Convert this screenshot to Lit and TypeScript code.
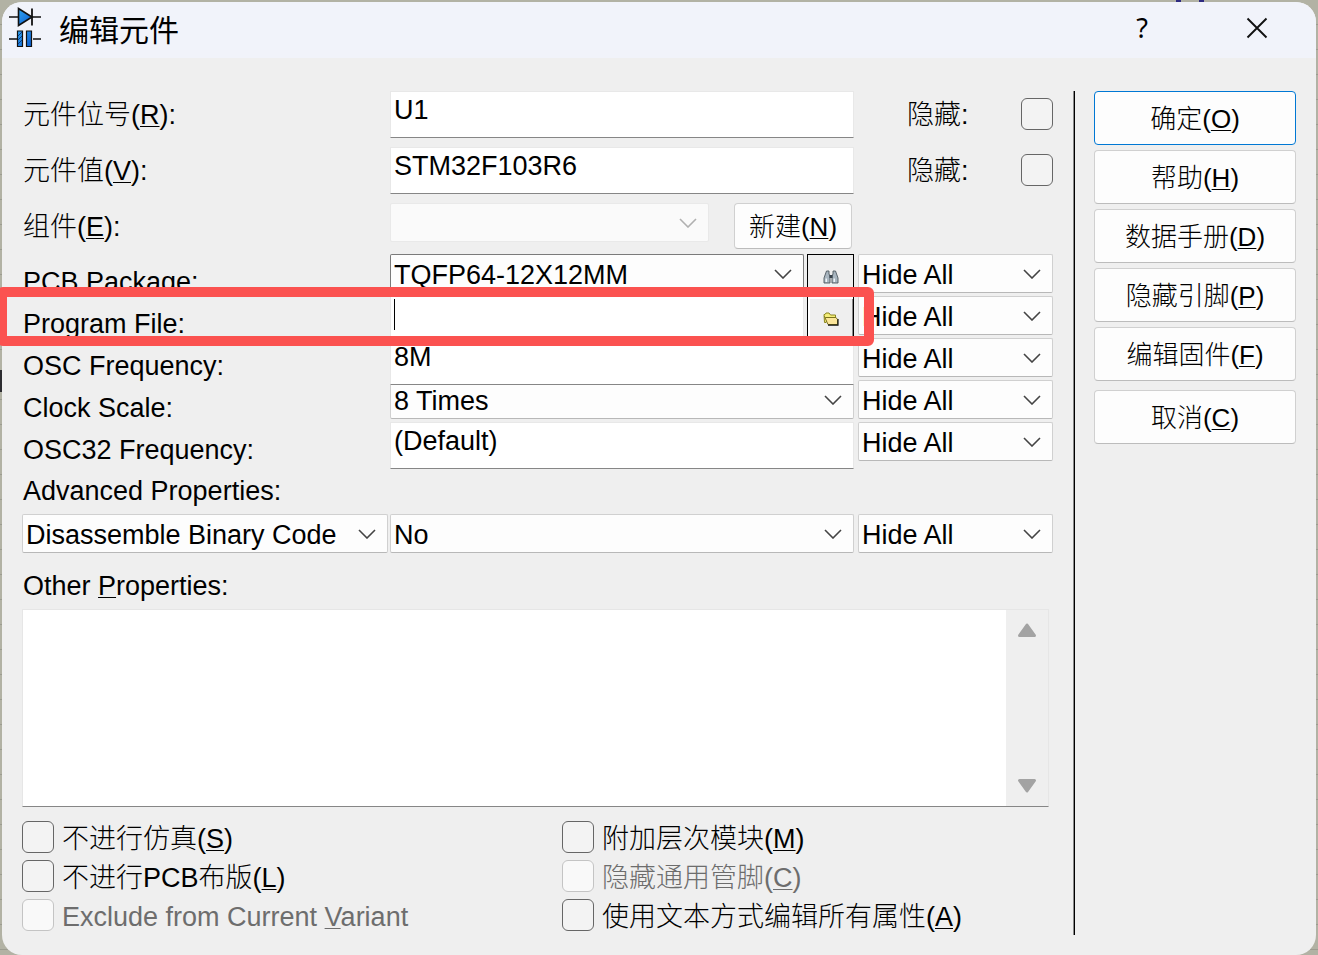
import { LitElement, html, css } from "lit";
import { customElement, property } from "lit/decorators.js";

const key = (k: string) => html`(<u>${k}</u>)`;

const chevron = html`<svg class="chev" viewBox="0 0 18 10" aria-hidden="true">
  <path d="M1 1 L9 9 L17 1" fill="none" stroke="currentColor" stroke-width="1.6" />
</svg>`;

@customElement("combo-box")
class ComboBox extends LitElement {
  @property() value = "";
  @property() label = "";
  @property({ type: Boolean }) disabled = false;

  static styles = css`
    :host { display: block; min-width: 0; }
    .wrap { display: grid; align-items: center; height: 39px; box-sizing: border-box; }
    .field, .chev { grid-area: 1 / 1; }
    .field {
      appearance: none; width: 100%; height: 100%; box-sizing: border-box; margin: 0;
      padding: 2px 40px 0 3px; border: 1px solid var(--combo-border, #d0d0d0);
      border-bottom-color: #b8b8b8; border-radius: 2px; background: #fdfdfd; color: #000;
      font: 27px/32px "Liberation Sans", "Noto Sans CJK SC", sans-serif; outline: none;
    }
    .field:disabled { background: #fafafa; border-color: #e9e9e9; opacity: 1; }
    .chev { width: 18px; height: 10px; justify-self: end; margin-right: 12px; color: #444; pointer-events: none; }
    :host([disabled]) .chev { color: #b0b0b0; }
  `;

  render() {
    return html`<div class="wrap">
      <select class="field" aria-label=${this.label} ?disabled=${this.disabled}>
        <option>${this.value}</option>
      </select>
      ${chevron}
    </div>`;
  }
}

@customElement("app-root")
class AppRoot extends LitElement {
  static styles = css`
    :host {
      display: block; min-height: 100vh; box-sizing: border-box; padding: 2px 2px 0;
      background:
        linear-gradient(#2e2a80, #2e2a80) no-repeat right 137px top / 5px 2px,
        linear-gradient(#2e2a80, #2e2a80) no-repeat right 114px top / 5px 2px,
        linear-gradient(#2c2c30, #2c2c30) no-repeat 0 370px / 2px 22px,
        repeating-linear-gradient(#b2b2a4 0 24px, #9c9c90 24px 25px);
      color: #000; font: 27px/32px "Liberation Sans", "Noto Sans CJK SC", sans-serif; font-weight: 300;
    }
    * { box-sizing: border-box; }
    u { text-decoration-thickness: 1px; text-underline-offset: 2px; }
    button, input, textarea { font: inherit; color: inherit; margin: 0; }
    .window { min-height: calc(100vh - 2px); border-radius: 20px; background: #efefef; }
    .title {
      display: flex; align-items: center; height: 56px; padding: 0 39px 4px 6px;
      background: #f1f3fa; border-radius: 20px 20px 0 0;
    }
    .logo { width: 34px; height: 42px; margin-right: 17px; }
    .name { flex: 1; margin: 0; font: 400 30px/40px "Noto Sans CJK SC", sans-serif; }
    .tool { display: grid; place-items: center; width: 40px; height: 40px; padding: 0; border: 0; background: none; }
    .tools { display: flex; gap: 75px; font-family: "Noto Sans", sans-serif; font-weight: 400; }
    .cross { width: 22px; height: 22px; }
    .body { display: grid; grid-template-columns: 1fr 2px 202px; gap: 19px; padding: 33px 20px 19px; }
    .form { min-width: 0; padding-right: 1px; }
    .rule { background: linear-gradient(90deg, #8a8a8a 50%, #000 50%); }
    .actions { display: flex; flex-direction: column; gap: 5px; }
    .push {
      height: 54px; border: 1px solid #d0d0d0; border-bottom-color: #bcbcbc; border-radius: 4px;
      background: #fdfdfd; font-size: 26px; padding: 2px 0 0;
    }
    .push.main { border-color: #0078d4; }
    .push.last { margin-top: 4px; }
    .push.small { width: 118px; height: 46px; }
    .row { display: grid; grid-template-columns: 368px 1fr 195px; height: 42px; position: relative; }
    .row.tall { height: 56px; }
    .row.part { height: 51px; }
    .label { padding: 12px 0 0 1px; }
    .tall .label, .part .label { padding-top: 8px; }
    .mid { display: flex; gap: 3px; min-width: 0; margin-right: 4px; }
    .mid combo-box { flex: 1; }
    .part .mid { gap: 25px; padding-right: 2px; }
    .dark { --combo-border: #7a7a7a; }
    .text {
      flex: 1; min-width: 0; height: 47px; padding: 0 3px 8px; border: 1px solid #e8e8e8;
      border-bottom-color: #868686; background: #fff; outline: none; border-radius: 0;
    }
    .over { z-index: 1; }
    .focus { caret-color: transparent; }
    .field { display: grid; flex: 1; }
    .field > * { grid-area: 1 / 1; }
    .caret { width: 1px; height: 31px; margin: 3px 0 0 4px; background: #000; }
    .pick { display: grid; place-items: center; width: 47px; height: 46px; padding: 0; border: 1px solid #000; background: #efefef; }
    .pick.raised { box-shadow: inset 2px 2px #fff, inset -1px -1px #8a8a8a; }
    .pick svg { width: 16px; height: 16px; }
    .hide { display: flex; justify-content: space-between; align-items: flex-start; padding-left: 49px; }
    .hide span { padding-top: 8px; }
    .box {
      appearance: none; flex: none; width: 32px; height: 32px; border: 1px solid #666;
      border-radius: 6px; background: #f3f3f3;
    }
    .box:checked { background: #0078d4; }
    .box:disabled { border-color: #c4c4c4; background: #f9f9f9; }
    .hide .box { margin-top: 7px; }
    .marked::after {
      content: ""; box-sizing: border-box; position: absolute; z-index: 2;
      top: -9px; left: -25px; right: 179px; height: 59px;
      border: 10px solid #fb5250; border-radius: 6px; pointer-events: none;
    }
    .heading { padding: 11px 0 7px 1px; }
    .adv { display: grid; grid-template-columns: 366px 1fr 195px; }
    .adv .second { margin: 0 4px 0 2px; }
    .notes-label { display: block; padding: 17px 0 7px 1px; }
    .notes { display: grid; grid-template-columns: 1fr 42px; height: 198px; margin-right: 4px; border: 1px solid #e6e6e6; border-bottom-color: #868686; }
    .area { resize: none; border: 0; background: #fff; outline: none; width: 100%; height: 100%; }
    .bar { display: flex; flex-direction: column; justify-content: space-between; align-items: center; padding: 12px 0; }
    .arrow { display: block; width: 20px; height: 16px; padding: 0; border: 0; background: none; }
    .arrow svg { display: block; width: 20px; height: 16px; }
    .checks { display: grid; grid-template-columns: 540px 1fr; row-gap: 7px; padding: 14px 0 4px; }
    .check { display: flex; align-items: center; gap: 8px; height: 32px; white-space: nowrap; }
    .check span { padding-top: 3px; }
    .check.off { color: #6d6d6d; }
  `;

  private check(text: unknown, off = false) {
    return html`<label class="check ${off ? "off" : ""}"><input class="box" type="checkbox" ?disabled=${off} /><span>${text}</span></label>`;
  }

  private visibility(name: string) {
    return html`<combo-box value="Hide All" label="${name} visibility"></combo-box>`;
  }

  render() {
    return html`<div class="window">
      <header class="title">
        <svg class="logo" viewBox="0 0 34 42" aria-hidden="true">
          <defs><linearGradient id="g" x1="0" y1="0" x2="1" y2="1"><stop offset="0" stop-color="#2fa4f2" /><stop offset="1" stop-color="#0a5bd0" /></linearGradient></defs>
          <path d="M1 10H33M1 32H10M25 32H33" stroke="#111" stroke-width="1.6" />
          <path d="M10.500 1.500V18.500L24 10Z" fill="url(#g)" stroke="#111" stroke-width="1.6" />
          <path d="M24 1.500V18.500" stroke="#111" stroke-width="1.8" />
          <path d="M9.500 24H14.500V39.500H9.500ZM18.500 24H23.500V39.500H18.500Z" fill="url(#g)" stroke="#111" stroke-width="1.2" />
          <path d="M10 29L14 25M10 33L14 29M10 37L14 33" stroke="#0b3a80" />
        </svg>
        <h1 class="name">编辑元件</h1>
        <div class="tools">
          <button class="tool" aria-label="Help">?</button>
          <button class="tool" aria-label="Close"><svg class="cross" viewBox="0 0 22 22"><path d="M1.500 1.500L20.500 20.500M20.500 1.500L1.500 20.500" stroke="#111" stroke-width="1.900" /></svg></button>
        </div>
      </header>
      <div class="body">
        <main class="form">
          <div class="row tall">
            <label class="label" for="ref">元件位号${key("R")}:</label>
            <div class="mid"><input class="text" id="ref" .value=${"U1"} /></div>
            <label class="hide"><span>隐藏:</span><input class="box" type="checkbox" /></label>
          </div>
          <div class="row tall">
            <label class="label" for="val">元件值${key("V")}:</label>
            <div class="mid"><input class="text" id="val" .value=${"STM32F103R6"} /></div>
            <label class="hide"><span>隐藏:</span><input class="box" type="checkbox" /></label>
          </div>
          <div class="row part">
            <span class="label">组件${key("E")}:</span>
            <div class="mid"><combo-box disabled label="组件"></combo-box><button class="push small">新建${key("N")}</button></div>
          </div>
          <div class="row">
            <span class="label">PCB Package:</span>
            <div class="mid"><combo-box class="dark" value="TQFP64-12X12MM" label="PCB Package"></combo-box>
              <button class="pick" aria-label="Search packages"><svg viewBox="0 0 16 16">
                <path d="M3.500 2H6V5L7 7V14H1V9ZM10 2H12.500L15 9V14H9V7L10 5Z" fill="#a9b6c0" stroke="#4d575f" stroke-width="0.9" />
                <path d="M6.500 6H9.500V9H6.500Z" fill="#39434c" /><path d="M2.500 9.500H4V13H2.500ZM10.500 9.500H12V13H10.500Z" fill="#eef4f8" />
              </svg></button></div>
            ${this.visibility("PCB Package")}
          </div>
          <div class="row marked">
            <label class="label" for="prog">Program File:</label>
            <div class="mid"><div class="field"><input class="text focus" id="prog" /><span class="caret"></span></div>
              <button class="pick raised" aria-label="Browse files"><svg viewBox="0 0 16 16">
                <path d="M1 3.500H2L3 2H6L7.500 4H12.500V7H4.500L3 11.500H1.500Z" fill="#f5ef78" stroke="#8a8420" />
                <path d="M1.500 5.500L5 13.500H14.500V8.500L13 6.500H2.500Z" fill="#fbe59a" stroke="#7a741c" />
                <path d="M5 14.200H15V8" fill="none" stroke="#111" stroke-width="1.200" />
              </svg></button></div>
            ${this.visibility("Program File")}
          </div>
          <div class="row over">
            <label class="label" for="osc">OSC Frequency:</label>
            <div class="mid"><input class="text" id="osc" .value=${"8M"} /></div>
            ${this.visibility("OSC Frequency")}
          </div>
          <div class="row">
            <span class="label">Clock Scale:</span>
            <div class="mid"><combo-box value="8 Times" label="Clock Scale"></combo-box></div>
            ${this.visibility("Clock Scale")}
          </div>
          <div class="row">
            <label class="label" for="osc32">OSC32 Frequency:</label>
            <div class="mid"><input class="text" id="osc32" .value=${"(Default)"} /></div>
            ${this.visibility("OSC32 Frequency")}
          </div>
          <div class="heading">Advanced Properties:</div>
          <div class="adv">
            <combo-box value="Disassemble Binary Code" label="Property"></combo-box>
            <combo-box class="second" value="No" label="Property value"></combo-box>
            ${this.visibility("Property")}
          </div>
          <label class="notes-label" for="other">Other <u>P</u>roperties:</label>
          <div class="notes">
            <textarea class="area" id="other"></textarea>
            <div class="bar">
              <button class="arrow" aria-label="Scroll up"><svg viewBox="0 0 20 16"><path d="M10 3L17.500 13.500H2.500Z" fill="#a3a3a3" stroke="#a3a3a3" stroke-width="3" stroke-linejoin="round" /></svg></button>
              <button class="arrow" aria-label="Scroll down"><svg viewBox="0 0 20 16"><path d="M10 13L17.500 2.500H2.500Z" fill="#a3a3a3" stroke="#a3a3a3" stroke-width="3" stroke-linejoin="round" /></svg></button>
            </div>
          </div>
          <div class="checks">
            ${this.check(html`不进行仿真${key("S")}`)}
            ${this.check(html`附加层次模块${key("M")}`)}
            ${this.check(html`不进行PCB布版${key("L")}`)}
            ${this.check(html`隐藏通用管脚${key("C")}`, true)}
            ${this.check(html`Exclude from Current <u>V</u>ariant`, true)}
            ${this.check(html`使用文本方式编辑所有属性${key("A")}`)}
          </div>
        </main>
        <div class="rule"></div>
        <aside class="actions">
          <button class="push main">确定${key("O")}</button>
          <button class="push">帮助${key("H")}</button>
          <button class="push">数据手册${key("D")}</button>
          <button class="push">隐藏引脚${key("P")}</button>
          <button class="push">编辑固件${key("F")}</button>
          <button class="push last">取消${key("C")}</button>
        </aside>
      </div>
    </div>`;
  }
}
